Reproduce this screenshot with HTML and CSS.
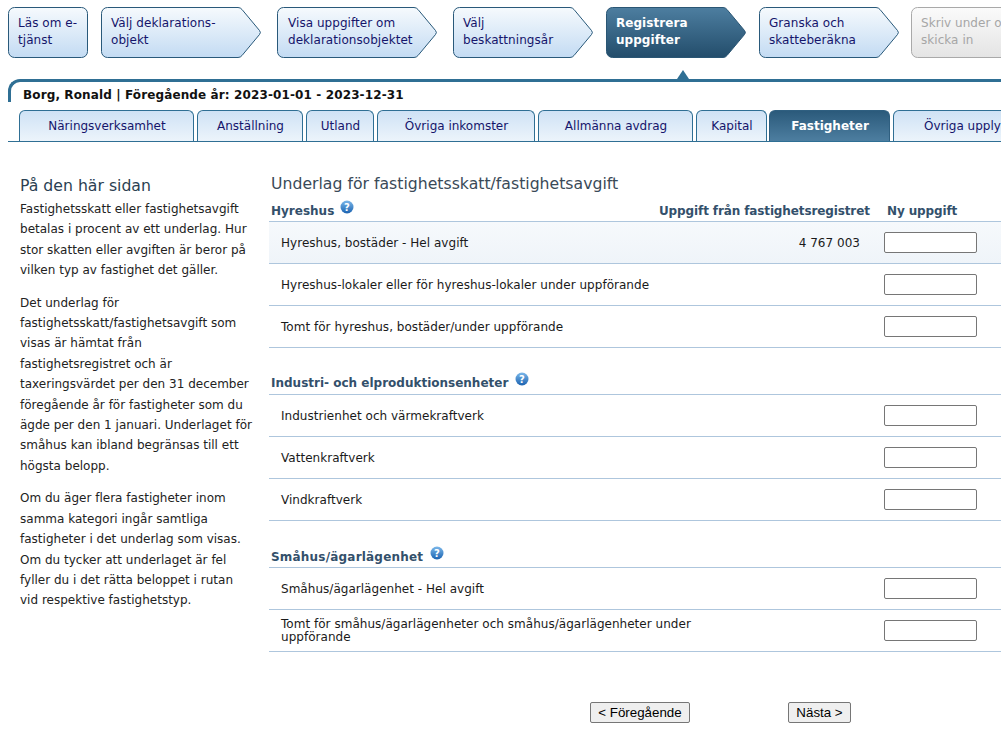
FILE: index.html
```html
<!DOCTYPE html>
<html lang="sv">
<head>
<meta charset="utf-8">
<title>Underlag för fastighetsskatt</title>
<link rel="stylesheet" href="styles.css">
</head>
<body>
<svg class="defs" width="0" height="0" aria-hidden="true">
  <defs>
    <linearGradient id="gn" x1="0" y1="0" x2="0" y2="1"><stop offset="0" stop-color="#f6fafd"/><stop offset="1" stop-color="#c3dbf3"/></linearGradient>
    <linearGradient id="ga" x1="0" y1="0" x2="0" y2="1"><stop offset="0" stop-color="#4d7ea0"/><stop offset="1" stop-color="#234d6b"/></linearGradient>
    <linearGradient id="gd" x1="0" y1="0" x2="0" y2="1"><stop offset="0" stop-color="#fbfbfb"/><stop offset="1" stop-color="#e4e4e4"/></linearGradient>
    <linearGradient id="gh" x1="0" y1="0" x2="0" y2="1"><stop offset="0" stop-color="#7cb8ea"/><stop offset="1" stop-color="#1a62b0"/></linearGradient>
  </defs>
</svg>
<div class="page">
  <nav class="steps">
    <div class="step s1">
      <svg class="shape" width="80" height="51"><rect x=".5" y=".5" width="79" height="50" rx="6" fill="url(#gn)" stroke="#29597a"/></svg>
      <span class="label">Läs om e-<br>tjänst</span>
    </div>
    <div class="step s2">
      <svg class="shape" width="160" height="51"><path d="M6.500.5H137a5 5 0 0 1 4 2l17.500 21a3 3 0 0 1 0 4L141 48.500a5 5 0 0 1-4 2H6.500a6 6 0 0 1-6-6V6.500a6 6 0 0 1 6-6z" fill="url(#gn)" stroke="#29597a"/></svg>
      <span class="label">Välj deklarations-<br>objekt</span>
    </div>
    <div class="step s3">
      <svg class="shape" width="160" height="51"><path d="M6.500.5H137a5 5 0 0 1 4 2l17.500 21a3 3 0 0 1 0 4L141 48.500a5 5 0 0 1-4 2H6.500a6 6 0 0 1-6-6V6.500a6 6 0 0 1 6-6z" fill="url(#gn)" stroke="#29597a"/></svg>
      <span class="label">Visa uppgifter om<br>deklarationsobjektet</span>
    </div>
    <div class="step s4">
      <svg class="shape" width="140" height="51"><path d="M6.500.5H117a5 5 0 0 1 4 2l17.500 21a3 3 0 0 1 0 4L121 48.500a5 5 0 0 1-4 2H6.500a6 6 0 0 1-6-6V6.500a6 6 0 0 1 6-6z" fill="url(#gn)" stroke="#29597a"/></svg>
      <span class="label">Välj<br>beskattningsår</span>
    </div>
    <div class="step s5 active">
      <svg class="shape" width="140" height="51"><path d="M6.500.5H117a5 5 0 0 1 4 2l17.500 21a3 3 0 0 1 0 4L121 48.500a5 5 0 0 1-4 2H6.500a6 6 0 0 1-6-6V6.500a6 6 0 0 1 6-6z" fill="url(#ga)" stroke="#2a5674"/></svg>
      <span class="label">Registrera<br>uppgifter</span>
    </div>
    <div class="step s6">
      <svg class="shape" width="140" height="51"><path d="M6.500.5H117a5 5 0 0 1 4 2l17.500 21a3 3 0 0 1 0 4L121 48.500a5 5 0 0 1-4 2H6.500a6 6 0 0 1-6-6V6.500a6 6 0 0 1 6-6z" fill="url(#gn)" stroke="#29597a"/></svg>
      <span class="label">Granska och<br>skatteberäkna</span>
    </div>
    <div class="step s7 disabled">
      <svg class="shape" width="140" height="51"><path d="M6.500.5H117a5 5 0 0 1 4 2l17.500 21a3 3 0 0 1 0 4L121 48.500a5 5 0 0 1-4 2H6.500a6 6 0 0 1-6-6V6.500a6 6 0 0 1 6-6z" fill="url(#gd)" stroke="#a9a9a9"/></svg>
      <span class="label">Skriv under och<br>skicka in</span>
    </div>
  </nav>

  <div class="panel">
    <span class="pointer"></span>
    <div class="who">Borg, Ronald | Föregående år: 2023-01-01 - 2023-12-31</div>
    <div class="tabs">
      <a class="tab t1">Näringsverksamhet</a>
      <a class="tab t2">Anställning</a>
      <a class="tab t3">Utland</a>
      <a class="tab t4">Övriga inkomster</a>
      <a class="tab t5">Allmänna avdrag</a>
      <a class="tab t6">Kapital</a>
      <a class="tab t7 current">Fastigheter</a>
      <a class="tab t8">Övriga upplysningar</a>
    </div>
  </div>

  <div class="content">
    <aside class="side">
      <h2>På den här sidan</h2>
      <p>Fastighetsskatt eller fastighetsavgift betalas i procent av ett underlag. Hur stor skatten eller avgiften är beror på vilken typ av fastighet det gäller.</p>
      <p>Det underlag för fastighetsskatt/fastighetsavgift som visas är hämtat från fastighetsregistret och är taxeringsvärdet per den 31 december föregående år för fastigheter som du ägde per den 1 januari. Underlaget för småhus kan ibland begränsas till ett högsta belopp.</p>
      <p>Om du äger flera fastigheter inom samma kategori ingår samtliga fastigheter i det underlag som visas. Om du tycker att underlaget är fel fyller du i det rätta beloppet i rutan vid respektive fastighetstyp.</p>
    </aside>
    <main class="main">
      <h1>Underlag för fastighetsskatt/fastighetsavgift</h1>

      <section class="group g1">
        <div class="ghead">
          <span class="gtitle">Hyreshus <svg class="help" width="14" height="14" viewBox="0 0 14 14"><circle cx="7" cy="7" r="6.500" fill="url(#gh)"/><text x="7" y="10.500" text-anchor="middle" class="q">?</text></svg></span>
          <span class="cola">Uppgift från fastighetsregistret</span>
          <span class="colb">Ny uppgift</span>
        </div>
        <div class="row shaded"><span class="name">Hyreshus, bostäder - Hel avgift</span><span class="val">4 767 003</span><span class="inp"><input type="text"></span></div>
        <div class="row"><span class="name wide">Hyreshus-lokaler eller för hyreshus-lokaler under uppförande</span><span class="val"></span><span class="inp"><input type="text"></span></div>
        <div class="row"><span class="name">Tomt för hyreshus, bostäder/under uppförande</span><span class="val"></span><span class="inp"><input type="text"></span></div>
      </section>

      <section class="group g2">
        <div class="ghead"><span class="gtitle">Industri- och elproduktionsenheter <svg class="help" width="14" height="14" viewBox="0 0 14 14"><circle cx="7" cy="7" r="6.500" fill="url(#gh)"/><text x="7" y="10.500" text-anchor="middle" class="q">?</text></svg></span></div>
        <div class="row"><span class="name">Industrienhet och värmekraftverk</span><span class="val"></span><span class="inp"><input type="text"></span></div>
        <div class="row"><span class="name">Vattenkraftverk</span><span class="val"></span><span class="inp"><input type="text"></span></div>
        <div class="row"><span class="name">Vindkraftverk</span><span class="val"></span><span class="inp"><input type="text"></span></div>
      </section>

      <section class="group g3">
        <div class="ghead"><span class="gtitle">Småhus/ägarlägenhet <svg class="help" width="14" height="14" viewBox="0 0 14 14"><circle cx="7" cy="7" r="6.500" fill="url(#gh)"/><text x="7" y="10.500" text-anchor="middle" class="q">?</text></svg></span></div>
        <div class="row"><span class="name">Småhus/ägarlägenhet - Hel avgift</span><span class="val"></span><span class="inp"><input type="text"></span></div>
        <div class="row"><span class="name wrap">Tomt för småhus/ägarlägenheter och småhus/ägarlägenheter under uppförande</span><span class="val"></span><span class="inp"><input type="text"></span></div>
      </section>

      <div class="buttons">
        <button type="button" class="btn prev">&lt; Föregående</button>
        <button type="button" class="btn next">Nästa &gt;</button>
      </div>
    </main>
  </div>
</div>
</body>
</html>
```
FILE: styles.css
```css
* { box-sizing: border-box; }
html, body { margin: 0; padding: 0; background: #fff; height: 734px; overflow: hidden; }
body { font-family: "DejaVu Sans", Verdana, sans-serif; font-size: 12px; color: #111; }
.defs { display: block; height: 0; }
.page { width: 1001px; height: 734px; overflow: hidden; padding-top: 7px; }

.steps { display: flex; height: 51px; padding-left: 8px; white-space: nowrap; }
.step { position: relative; flex: none; height: 51px; color: #15156b; line-height: 17px; }
.shape { position: absolute; left: 0; top: 0; }
.label { position: relative; display: block; padding: 8px 0 0 10px; font-size: 12px; letter-spacing: .05px; }
.s1 { width: 80px; margin-right: 13px; }
.s2 { width: 160px; margin-right: 16px; }
.s3 { width: 160px; margin-right: 16px; }
.s3 .label { padding-left: 11px; }
.s4 { width: 140px; margin-right: 13px; }
.s5 { width: 140px; margin-right: 13px; }
.s6 { width: 140px; margin-right: 12px; }
.s7 { width: 140px; }
.active { color: #fff; font-weight: bold; }
.disabled { color: #a6a6a6; }

.panel { position: relative; margin: 21px 0 0 8px; height: 63px; border-top: 3px solid #2f6f94; border-left: 3px solid #2f6f94; border-top-left-radius: 12px; }
.panel::after { content: ""; position: absolute; left: -3px; top: 20px; width: 3px; height: 40px; background: #fff; }
.pointer { position: absolute; left: 666px; top: -12px; width: 0; height: 0; border-left: 6px solid transparent; border-right: 6px solid transparent; border-bottom: 9px solid #2f6f94; }
.who { padding: 3px 0 0 12px; height: 28px; line-height: 20px; font-weight: bold; color: #111; font-size: 12px; letter-spacing: .12px; white-space: nowrap; }
.tabs { display: flex; gap: 3px; height: 32px; margin-left: -3px; padding-left: 11px; border-bottom: 1px solid #2f6f94; white-space: nowrap; position: relative; z-index: 1; background: #fff; }
.tab { flex: none; display: flex; justify-content: center; align-items: center; height: 31px; border: 1px solid #2f6f94; border-bottom: 0; border-radius: 6px 6px 0 0; background: linear-gradient(#cfe2f5, #ecf4fb); color: #15156b; font-size: 12px; padding: 0 0 1px 1px; }
.t1 { width: 175px; }
.t2 { width: 106px; }
.t3 { width: 68px; }
.t4 { width: 158px; }
.t5 { width: 155px; }
.t6 { width: 71px; }
.t7 { width: 121px; margin-left: -1px; }
.t8 { width: 180px; justify-content: flex-start; padding-left: 30px; }
.current { background: linear-gradient(#2b5a7b, #4d7ea0); color: #fff; font-weight: bold; border-color: #2f5f80; }

.content { display: flex; padding: 31px 0 0 20px; }
.side { flex: none; width: 249px; padding-top: 2px; }
.side h2 { margin: 0 0 2px; font-size: 15.700px; font-weight: normal; line-height: 22px; color: #2b3f52; }
.side p { width: 234px; margin: 0 0 12px; line-height: 20.400px; font-size: 12px; letter-spacing: .01px; color: #222; }

.main { flex: none; width: 740px; }
.main h1 { margin: 0; font-size: 15.700px; font-weight: normal; line-height: 22px; padding-left: 2px; color: #3a4a58; white-space: nowrap; }
.ghead { display: flex; align-items: flex-end; height: 26px; padding: 0 0 3px 2px; white-space: nowrap; font-weight: bold; color: #33506b; font-size: 12px; }
.gtitle { flex: none; position: relative; }
.help { vertical-align: 1px; margin-left: 2px; }
.q { font: bold 10px "DejaVu Sans", sans-serif; fill: #fff; }
.cola, .colb { flex: none; letter-spacing: -.12px; }
.cola { width: 228px; }
.colb { width: 122px; }
.g1 .ghead { justify-content: flex-end; }
.g1 .ghead .gtitle { width: 0; margin-right: auto; }
.row { display: flex; align-items: center; width: 745px; height: 42px; border-top: 1px solid #aec6dd; padding-left: 12px; letter-spacing: .03px; }
.row:last-child { height: 43px; border-bottom: 1px solid #aec6dd; }
.shaded { background: linear-gradient(#f6f9fc, #eff4f9); }
.name { flex: none; width: 420px; white-space: nowrap; color: #1a1a1a; line-height: 13px; padding-top: 1px; }
.wrap { white-space: normal; }
.val { flex: none; width: 159px; text-align: right; color: #1a1a1a; padding-top: 1px; }
.inp { flex: none; margin-left: 24px; }
.inp input { display: block; width: 93px; height: 21px; padding: 1px 2px; border: 1px solid #767676; border-radius: 2px; background: #fff; margin: 0; }

.g2 { margin-top: 25px; }
.g3 { margin-top: 25px; }
.g2 .ghead, .g3 .ghead { height: 21px; padding-bottom: 4px; }
.g3 .ghead { padding-bottom: 3px; letter-spacing: .2px; }

.buttons { height: 21px; margin-top: 50px; display: flex; padding-left: 321px; }
.btn { height: 21px; padding: 0; border: 1px solid #767676; border-radius: 2px; background: #efefef; font-family: "Liberation Sans", Arial, sans-serif; font-size: 13.330px; color: #000; line-height: 1; }
.prev { width: 100px; }
.next { width: 63px; margin-left: 98px; }
```
